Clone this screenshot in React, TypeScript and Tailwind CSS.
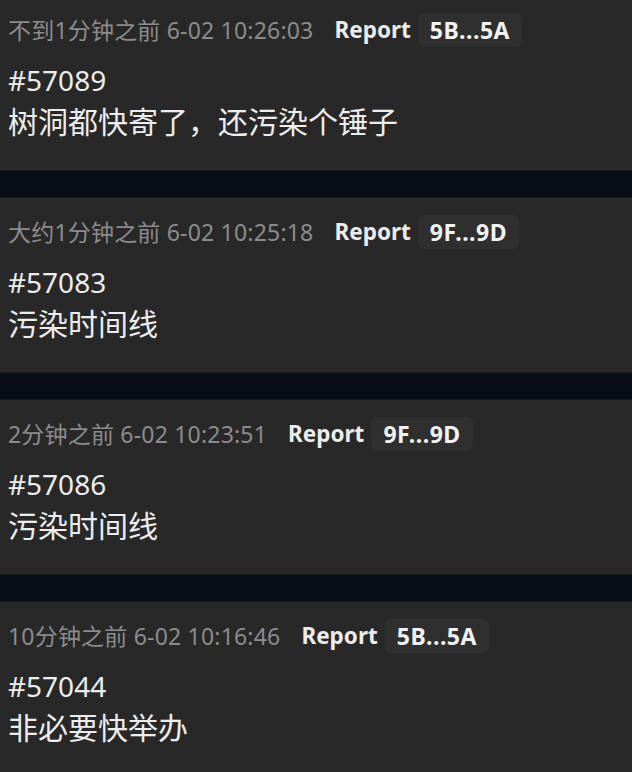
import React from 'react';

const posts = [
  { ago: '不到1分钟之前', time: '6-02 10:26:03', user: '5B...5A', pid: '#57089', text: '树洞都快寄了，还污染个锤子' },
  { ago: '大约1分钟之前', time: '6-02 10:25:18', user: '9F...9D', pid: '#57083', text: '污染时间线' },
  { ago: '2分钟之前', time: '6-02 10:23:51', user: '9F...9D', pid: '#57086', text: '污染时间线' },
  { ago: '10分钟之前', time: '6-02 10:16:46', user: '5B...5A', pid: '#57044', text: '非必要快举办' },
];

const font = { fontFamily: '"Noto Sans", "Noto Sans CJK SC", sans-serif' };

const App: React.FC = () => {
  return (
    <div className="h-[772px] w-[632px] overflow-hidden bg-[#080c14]" style={font}>
      <div className="-mt-[4px] flex flex-col">
        {posts.map((post, index) => (
          <React.Fragment key={index}>
            {index > 0 && (
              <div className="h-[28px] border-y border-[#141a22] bg-[#080c14]" />
            )}
            {/* Post card */}
            <div className="h-[174px] bg-[#282828] px-2 pt-[17px]">
              <div className="flex h-[34px] items-center">
                <span className="text-[23px] tracking-[0.2px] text-[#8c8c8c]">
                  {post.ago} {post.time}
                </span>
                <span className="ml-[21px] text-[22.5px] font-bold text-[#ececec]">Report</span>
                <span className="ml-[7px] flex h-[34px] items-center rounded-md bg-[#2f2f2f] px-3 text-[23px] font-bold tracking-[0.5px] text-[#f2f2f2]">
                  {post.user}
                </span>
              </div>
              <div className="mt-[12px] text-[28px] leading-[42px] text-[#ededed]">{post.pid}</div>
              <div className="text-[30px] leading-[42px] text-[#ededed]">{post.text}</div>
            </div>
          </React.Fragment>
        ))}
      </div>
    </div>
  );
};

export default App;
